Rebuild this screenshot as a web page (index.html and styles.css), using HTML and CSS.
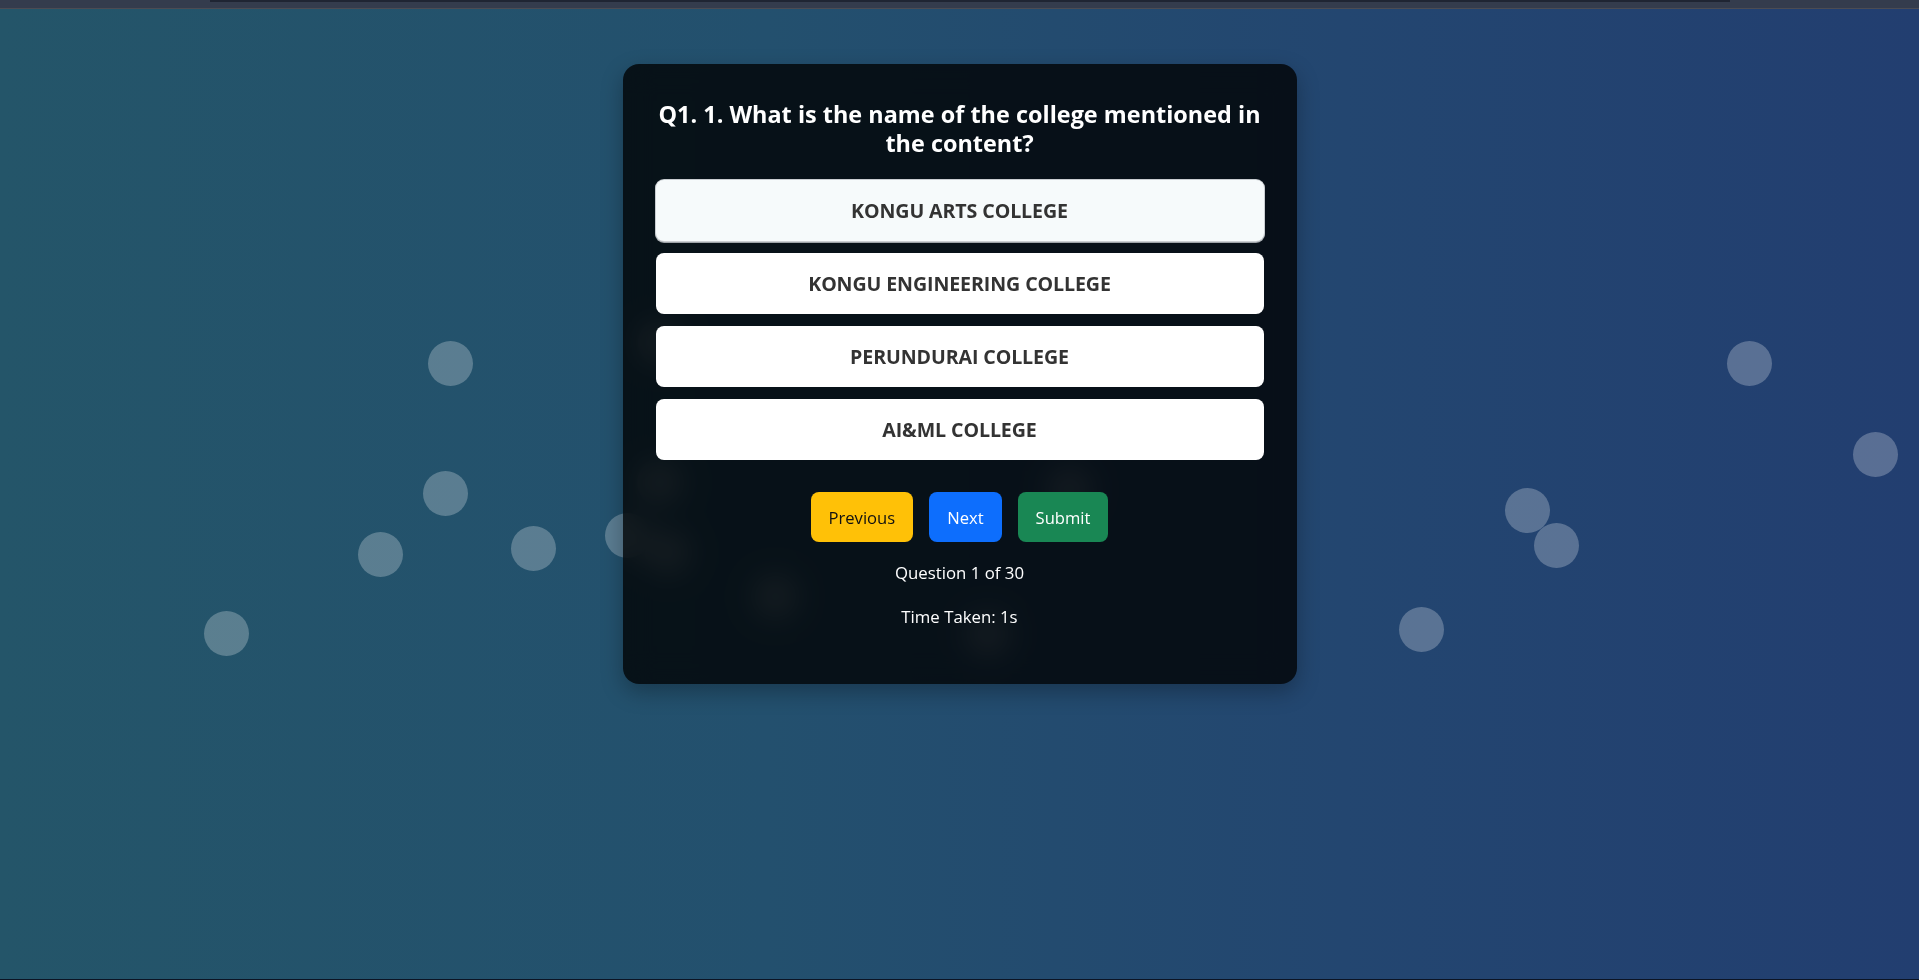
FILE: index.html
```html
<!DOCTYPE html>
<html lang="en">
<head>
<meta charset="utf-8">
<title>Quiz</title>
<link rel="stylesheet" href="styles.css">
</head>
<body>
<div class="topbar"><div class="topbar-line"></div></div>
<main class="stage">
  <div class="bubbles" aria-hidden="true">
    <span class="bubble" style="left:428px;top:332px"></span>
    <span class="bubble" style="left:423px;top:462px"></span>
    <span class="bubble" style="left:358px;top:523px"></span>
    <span class="bubble" style="left:511px;top:517px"></span>
    <span class="bubble" style="left:204px;top:602px"></span>
    <span class="bubble" style="left:605px;top:504px"></span>
    <span class="bubble" style="left:1727px;top:332px"></span>
    <span class="bubble" style="left:1853px;top:423px"></span>
    <span class="bubble" style="left:1505px;top:479px"></span>
    <span class="bubble" style="left:1534px;top:514px"></span>
    <span class="bubble" style="left:1399px;top:598px"></span>
    <span class="bubble" style="left:638px;top:311px"></span>
    <span class="bubble" style="left:637px;top:451px"></span>
    <span class="bubble" style="left:645px;top:521px"></span>
    <span class="bubble" style="left:753px;top:565px"></span>
    <span class="bubble" style="left:1047px;top:458px"></span>
    <span class="bubble" style="left:965px;top:603px"></span>
  </div>

  <section class="quiz-card">
    <h2 class="question">Q1. 1. What is the name of the college mentioned in the content?</h2>
    <div class="options">
      <button class="option option-hover">KONGU ARTS COLLEGE</button>
      <button class="option">KONGU ENGINEERING COLLEGE</button>
      <button class="option">PERUNDURAI COLLEGE</button>
      <button class="option">AI&amp;ML COLLEGE</button>
    </div>
    <div class="nav">
      <button class="btn btn-prev">Previous</button>
      <button class="btn btn-next">Next</button>
      <button class="btn btn-submit">Submit</button>
    </div>
    <p class="meta meta-count">Question 1 of 30</p>
    <p class="meta meta-time">Time Taken: 1s</p>
  </section>
</main>
</body>
</html>
```
FILE: styles.css
```css
* {
  box-sizing: border-box;
}

html, body {
  margin: 0;
  padding: 0;
}

body {
  width: 1919px;
  height: 980px;
  overflow: hidden;
  font-family: "Open Sans", "Noto Sans", sans-serif;
  background: #0c1424;
}

.topbar {
  height: 9px;
  background: #343c4d;
  border-bottom: 1px solid #4c4c53;
  position: relative;
}

.topbar-line {
  margin-left: 210px;
  width: 1520px;
  height: 2px;
  background: #1f2533;
}

.stage {
  position: relative;
  height: 970px;
  background: linear-gradient(to right, #245569 0%, #23506e 40%, #234670 70%, #223e70 100%);
  display: flex;
  justify-content: center;
  align-items: flex-start;
  padding-top: 55px;
}

.bubbles {
  position: absolute;
  inset: 0;
  pointer-events: none;
}

.bubble {
  position: absolute;
  width: 45px;
  height: 45px;
  border-radius: 50%;
  background: rgba(255, 255, 255, 0.25);
}

.quiz-card {
  position: relative;
  z-index: 1;
  width: 674px;
  padding: 36px 33px 34px;
  border-radius: 16px;
  background: rgba(0, 0, 0, 0.78);
  backdrop-filter: blur(14px);
  box-shadow: 0 8px 22px rgba(0, 0, 0, 0.28);
  text-align: center;
  color: #ffffff;
}

.question {
  margin: 0 0 22px;
  font-size: 23.4px;
  line-height: 29px;
  font-weight: 700;
  letter-spacing: 0.02px;
}

.options {
  display: flex;
  flex-direction: column;
  gap: 12px;
}

.option {
  display: block;
  width: 100%;
  height: 61px;
  border: 0;
  border-radius: 8px;
  background: #ffffff;
  color: #333333;
  font-family: inherit;
  font-size: 19.6px;
  font-weight: 700;
  letter-spacing: -0.1px;
  cursor: pointer;
}

.option-hover {
  background: #f6fafb;
  box-shadow: 0 0 0 1px #c9cdd1, 0 1px 0 1px #9ea3a8;
}

.nav {
  display: flex;
  justify-content: center;
  gap: 16px;
  margin-top: 32px;
}

.btn {
  height: 50px;
  padding: 0 18px;
  border: 0;
  border-radius: 8px;
  font-family: inherit;
  font-size: 16.6px;
  font-weight: 400;
  color: #ffffff;
  cursor: pointer;
}

.btn-prev {
  background: #ffc107;
  color: #111111;
}

.btn-next {
  background: #0d6efd;
}

.btn-submit {
  background: #198754;
}

.meta {
  margin: 0;
  font-size: 16.8px;
  line-height: 27px;
  color: #ffffff;
}

.meta-count {
  margin-top: 17px;
}

.meta-time {
  margin-top: 17px;
  margin-bottom: 20px;
}
```
